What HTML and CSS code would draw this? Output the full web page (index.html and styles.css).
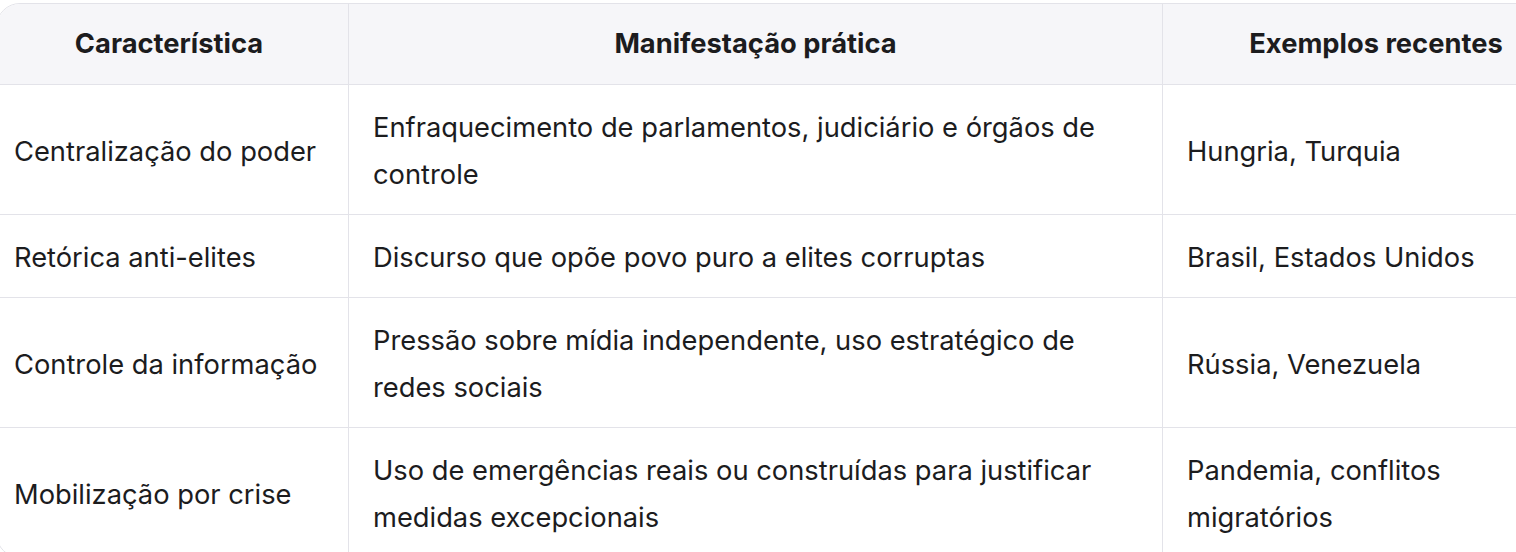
FILE: index.html
```html
<!DOCTYPE html>
<html lang="pt">
<head>
<meta charset="utf-8">
<title>Características</title>
<link rel="stylesheet" href="styles.css">
</head>
<body>
<div class="wrap">
  <table class="grid">
    <colgroup>
      <col class="c1">
      <col class="c2">
      <col class="c3">
    </colgroup>
    <thead>
      <tr>
        <th>Característica</th>
        <th>Manifestação prática</th>
        <th>Exemplos recentes</th>
      </tr>
    </thead>
    <tbody>
      <tr>
        <td>Centralização do poder</td>
        <td>Enfraquecimento de parlamentos, judiciário e órgãos de controle</td>
        <td>Hungria, Turquia</td>
      </tr>
      <tr>
        <td>Retórica anti-elites</td>
        <td>Discurso que opõe povo puro a elites corruptas</td>
        <td>Brasil, Estados Unidos</td>
      </tr>
      <tr>
        <td>Controle da informação</td>
        <td>Pressão sobre mídia independente, uso estratégico de redes sociais</td>
        <td>Rússia, Venezuela</td>
      </tr>
      <tr>
        <td>Mobilização por crise</td>
        <td>Uso de emergências reais ou construídas para justificar medidas excepcionais</td>
        <td>Pandemia, conflitos migratórios</td>
      </tr>
    </tbody>
  </table>
</div>
</body>
</html>
```
FILE: styles.css
```css
html, body {
  margin: 0;
  padding: 0;
  background: #ffffff;
  overflow: hidden;
}

body {
  font-family: Inter, "Noto Sans", sans-serif;
  color: #1c1c1e;
  font-size: 27.3px;
}

.wrap {
  padding-top: 3px;
  margin-left: -4px;
  width: 1600px;
}

.grid {
  table-layout: fixed;
  width: 1594px;
  border-collapse: separate;
  border-spacing: 0;
  border: 1px solid #e3e3e9;
  border-radius: 24px;
  overflow: hidden;
}

.c1 { width: 352px; }
.c2 { width: 814px; }
.c3 { width: 426px; }

.grid th,
.grid td {
  line-height: 47px;
  padding: 17px 24px 17px 24px;
  border-right: 1px solid #e3e3e9;
  border-bottom: 1px solid #e3e3e9;
  vertical-align: middle;
}

.grid th:last-child,
.grid td:last-child {
  border-right: none;
}

.grid tbody tr:last-child td {
  border-bottom: none;
}

.grid th:first-child,
.grid td:first-child {
  padding-left: 17px;
}

.grid th {
  background: #f6f6f9;
  font-weight: 700;
  text-align: center;
  padding-top: 16px;
  padding-bottom: 17px;
}

.grid td {
  font-weight: 400;
  text-align: left;
  padding-top: 19px;
  padding-bottom: 16px;
}
```
